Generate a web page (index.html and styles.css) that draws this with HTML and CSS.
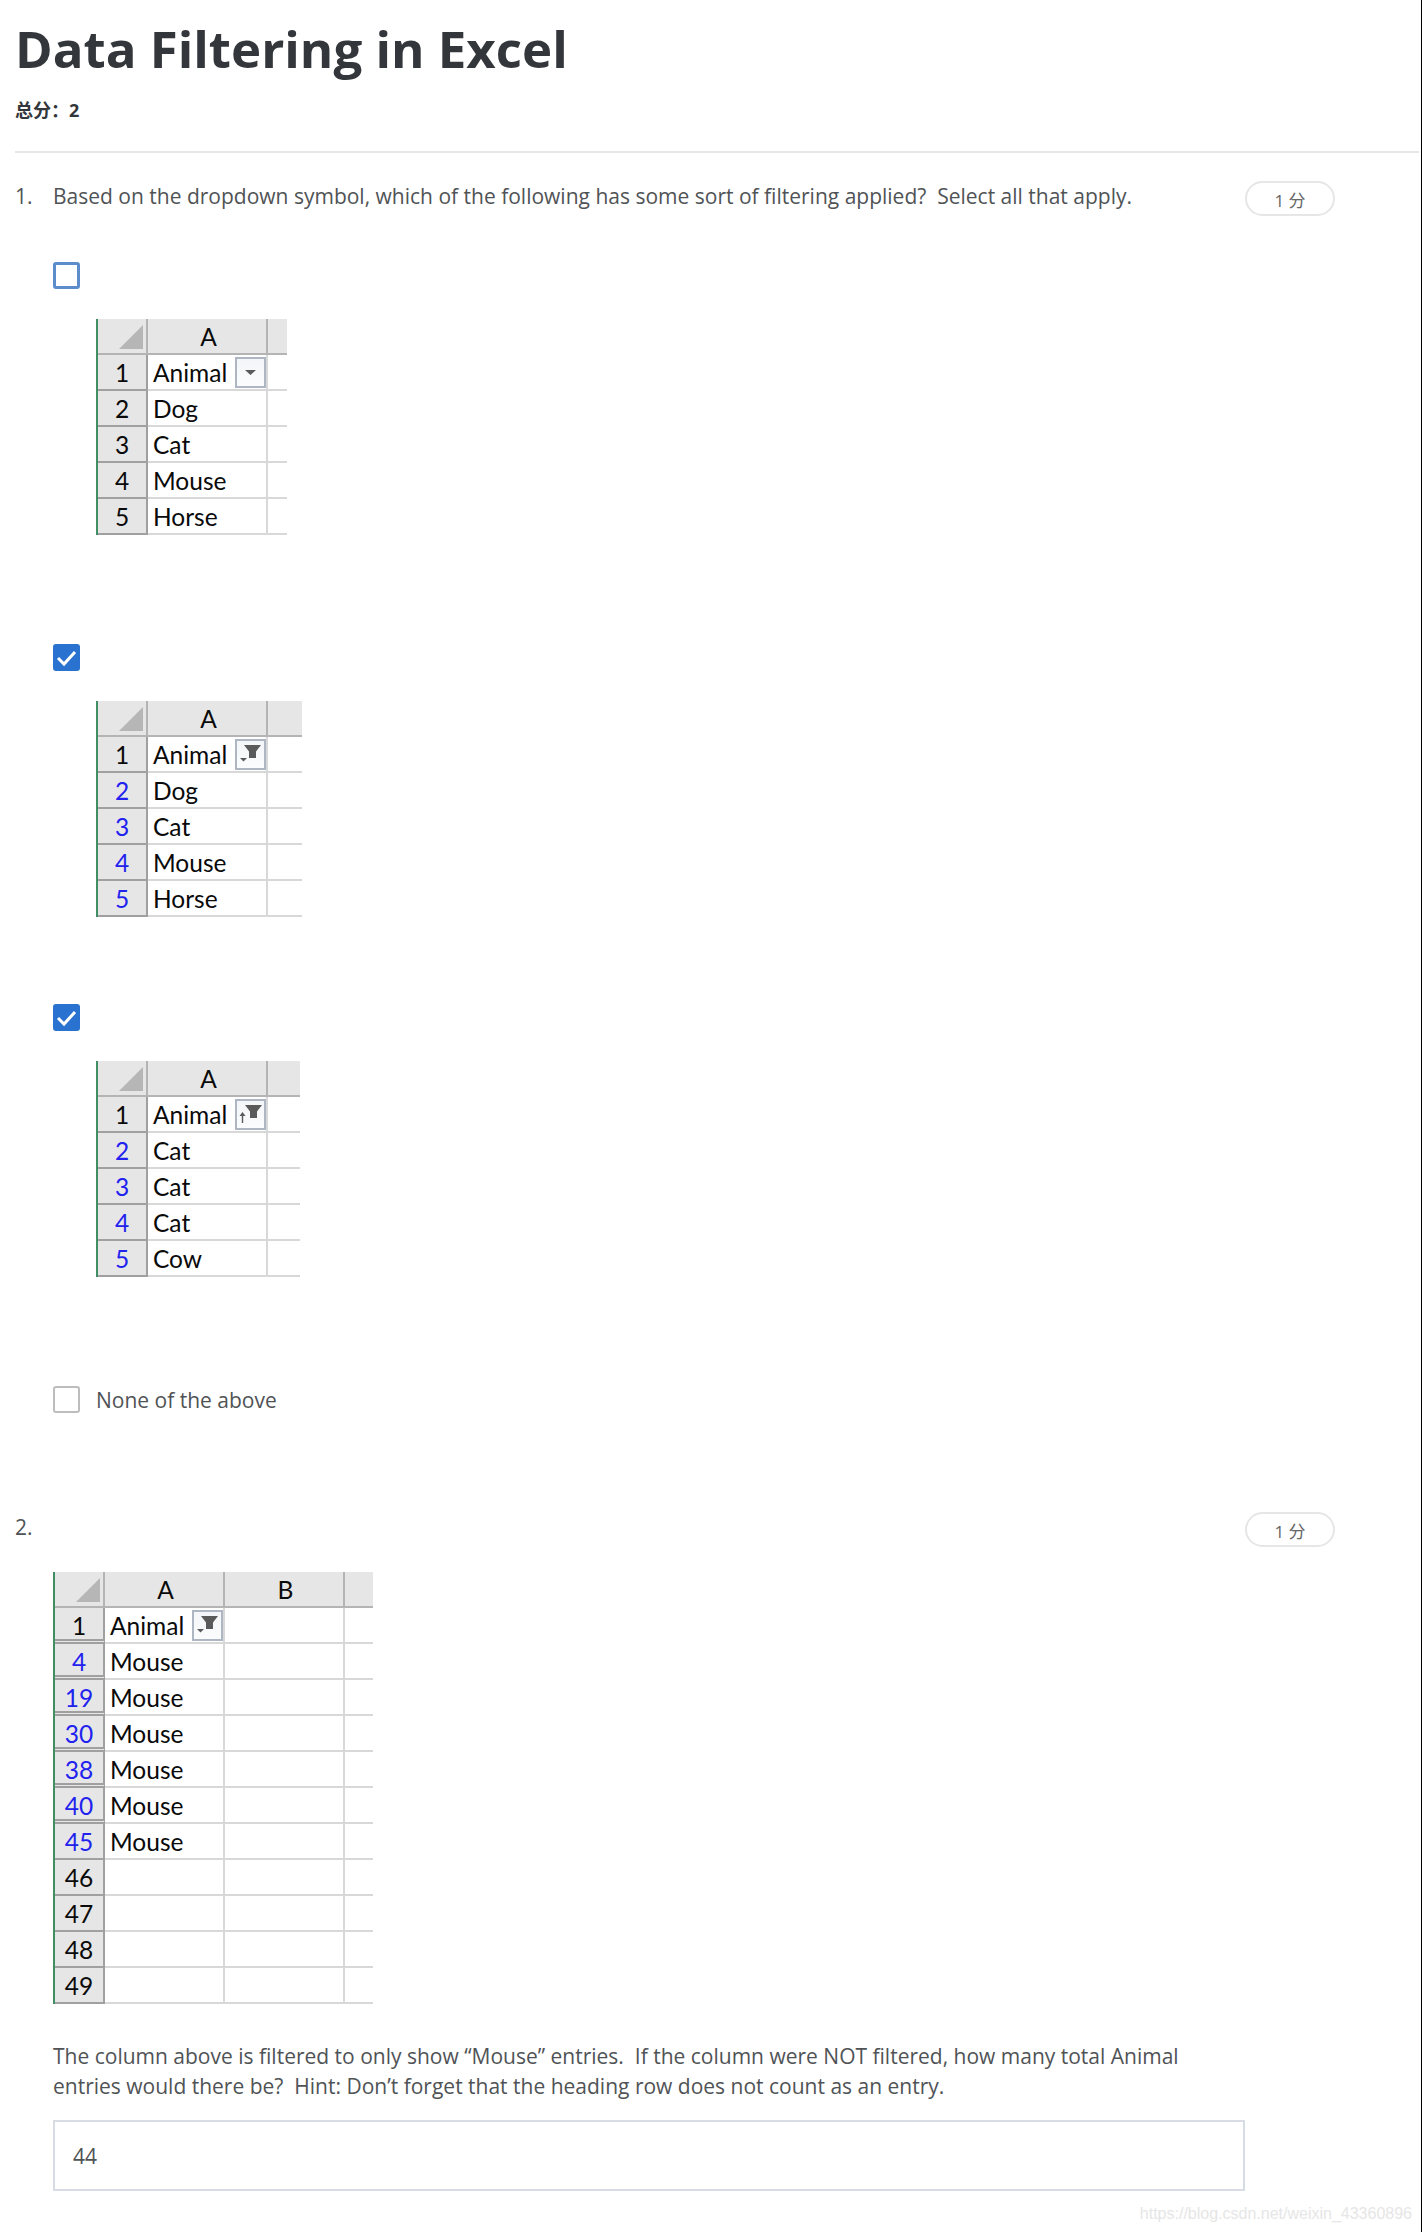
FILE: index.html
```html
<!DOCTYPE html>
<html lang="zh">
<head>
<meta charset="utf-8">
<title>Data Filtering in Excel</title>
<link rel="stylesheet" href="styles.css">
</head>
<body>
<main class="page">
  <header class="head">
    <h1 class="title">Data Filtering in Excel</h1>
    <p class="total">总分：2</p>
  </header>
  <hr class="rule">

  <section class="q">
    <div class="q-row">
      <span class="q-num">1.</span>
      <p class="q-text">Based on the dropdown symbol, which of the following has some sort of filtering applied?&nbsp; Select all that apply.</p>
      <span class="pill">1 分</span>
    </div>

    <div class="opt opt-a">
      <span class="cb cb-focus"></span>
      <div class="sheet sheet-a">
        <div class="cell corner"><svg class="tri" viewBox="0 0 24 24"><path d="M24 0V24H0Z"/></svg></div><div class="cell col">A</div><div class="cell col end"></div>
        <div class="cell rowh">1</div><div class="cell data">Animal<span class="fbtn"><svg viewBox="0 0 27 27"><path class="ico" d="M8 11h11l-5.500 5z"/></svg></span></div><div class="cell blank"></div>
        <div class="cell rowh">2</div><div class="cell data">Dog</div><div class="cell blank"></div>
        <div class="cell rowh">3</div><div class="cell data">Cat</div><div class="cell blank"></div>
        <div class="cell rowh">4</div><div class="cell data">Mouse</div><div class="cell blank"></div>
        <div class="cell rowh">5</div><div class="cell data">Horse</div><div class="cell blank"></div>
      </div>
    </div>

    <div class="opt opt-b">
      <span class="cb cb-on"><svg viewBox="0 0 27 27"><path d="M5 14l6 6L22 8" fill="none" stroke="#fff" stroke-width="3"/></svg></span>
      <div class="sheet sheet-b">
        <div class="cell corner"><svg class="tri" viewBox="0 0 24 24"><path d="M24 0V24H0Z"/></svg></div><div class="cell col">A</div><div class="cell col end"></div>
        <div class="cell rowh">1</div><div class="cell data">Animal<span class="fbtn"><svg viewBox="0 0 27 27"><path class="ico" d="M7 4h17l-5 6.500V17h-7v-6.500z"/><path class="ico" d="M3 17h7l-3.500 3.500z"/></svg></span></div><div class="cell blank"></div>
        <div class="cell rowh hit">2</div><div class="cell data">Dog</div><div class="cell blank"></div>
        <div class="cell rowh hit">3</div><div class="cell data">Cat</div><div class="cell blank"></div>
        <div class="cell rowh hit">4</div><div class="cell data">Mouse</div><div class="cell blank"></div>
        <div class="cell rowh hit">5</div><div class="cell data">Horse</div><div class="cell blank"></div>
      </div>
    </div>

    <div class="opt opt-c">
      <span class="cb cb-on"><svg viewBox="0 0 27 27"><path d="M5 14l6 6L22 8" fill="none" stroke="#fff" stroke-width="3"/></svg></span>
      <div class="sheet sheet-c">
        <div class="cell corner"><svg class="tri" viewBox="0 0 24 24"><path d="M24 0V24H0Z"/></svg></div><div class="cell col">A</div><div class="cell col end"></div>
        <div class="cell rowh">1</div><div class="cell data">Animal<span class="fbtn"><svg viewBox="0 0 27 27"><path class="ico" d="M8 4h17l-5 6.500V17h-7v-6.500z"/><path class="ico" d="M5.500 11l-3 4h2.300v7h1.400v-7h2.300z"/></svg></span></div><div class="cell blank"></div>
        <div class="cell rowh hit">2</div><div class="cell data">Cat</div><div class="cell blank"></div>
        <div class="cell rowh hit">3</div><div class="cell data">Cat</div><div class="cell blank"></div>
        <div class="cell rowh hit">4</div><div class="cell data">Cat</div><div class="cell blank"></div>
        <div class="cell rowh hit">5</div><div class="cell data">Cow</div><div class="cell blank"></div>
      </div>
    </div>

    <div class="opt-line">
      <span class="cb cb-off"></span>
      <span class="opt-label">None of the above</span>
    </div>
  </section>

  <section class="q q2">
    <div class="q-row">
      <span class="q-num">2.</span>
      <p class="q-text"></p>
      <span class="pill">1 分</span>
    </div>
    <div class="sheet sheet-d">
      <div class="cell corner"><svg class="tri" viewBox="0 0 24 24"><path d="M24 0V24H0Z"/></svg></div><div class="cell col">A</div><div class="cell col">B</div><div class="cell col end"></div>
      <div class="cell rowh gap">1</div><div class="cell data">Animal<span class="fbtn"><svg viewBox="0 0 27 27"><path class="ico" d="M7 4h17l-5 6.500V17h-7v-6.500z"/><path class="ico" d="M3 17h7l-3.500 3.500z"/></svg></span></div><div class="cell"></div><div class="cell blank"></div>
      <div class="cell rowh hit gap">4</div><div class="cell data">Mouse</div><div class="cell"></div><div class="cell blank"></div>
      <div class="cell rowh hit gap">19</div><div class="cell data">Mouse</div><div class="cell"></div><div class="cell blank"></div>
      <div class="cell rowh hit gap">30</div><div class="cell data">Mouse</div><div class="cell"></div><div class="cell blank"></div>
      <div class="cell rowh hit gap">38</div><div class="cell data">Mouse</div><div class="cell"></div><div class="cell blank"></div>
      <div class="cell rowh hit gap">40</div><div class="cell data">Mouse</div><div class="cell"></div><div class="cell blank"></div>
      <div class="cell rowh hit">45</div><div class="cell data">Mouse</div><div class="cell"></div><div class="cell blank"></div>
      <div class="cell rowh">46</div><div class="cell data"></div><div class="cell"></div><div class="cell blank"></div>
      <div class="cell rowh">47</div><div class="cell data"></div><div class="cell"></div><div class="cell blank"></div>
      <div class="cell rowh">48</div><div class="cell data"></div><div class="cell"></div><div class="cell blank"></div>
      <div class="cell rowh">49</div><div class="cell data"></div><div class="cell"></div><div class="cell blank"></div>
    </div>
    <p class="para">The column above is filtered to only show “Mouse” entries.&nbsp; If the column were NOT filtered, how many total Animal<br>entries would there be?&nbsp; Hint: Don’t forget that the heading row does not count as an entry.</p>
    <div class="answer">44</div>
  </section>
  <p class="mark">https://blog.csdn.net/weixin_43360896</p>
</main>
</body>
</html>
```
FILE: styles.css
```css
* { box-sizing: border-box; }
html, body { margin: 0; padding: 0; background: #fff; }
body {
  width: 1422px;
  height: 2232px;
  overflow: hidden;
  font-family: "Open Sans", "Noto Sans CJK SC", sans-serif;
  color: #505356;
  border-right: 1px solid #000;
}
.page { padding: 15px 2px 0 15px; position: relative; height: 100%; }

.title { margin: 0; font-size: 51px; line-height: 66px; font-weight: 700; color: #33363a; }
.total { margin: 17px 0 0; font-size: 18px; line-height: 24px; font-weight: 700; color: #33363a; }
.rule { margin: 29px 0 0; border: 0; height: 2px; background: #e6e6e6; }

.q { padding-top: 28px; }
.q-row { display: flex; align-items: flex-start; height: 35px; }
.q-num { width: 38px; font-size: 21px; line-height: 30px; }
.q-text { width: 1192px; margin: 0; font-size: 21px; line-height: 30px; }
.pill {
  width: 90px; height: 35px; border: 2px solid #e6e6e6; border-radius: 18px;
  display: flex; align-items: center; justify-content: center;
  padding-top: 2px;
  font-size: 17px; color: #666;
}

.opt { margin-left: 38px; }
.opt-a { margin-top: 46px; }
.opt-b { margin-top: 109px; }
.opt-c { margin-top: 87px; }
.cb { display: block; width: 27px; height: 27px; border-radius: 3px; flex: none; }
.cb svg { display: block; width: 27px; height: 27px; }
.cb-focus { border: 3px solid #5c8ccc; }
.cb-on { background: #2a72d0; }
.cb-off { border: 2px solid #bdbdbd; }

.opt-line { display: flex; align-items: center; gap: 16px; margin: 109px 0 0 38px; height: 27px; }
.opt-label { font-size: 21px; }

.sheet {
  display: grid;
  grid-auto-rows: 36px;
  margin: 30px 0 0 43px;
  border-left: 2px solid #3f8f63;
  font-family: Lato, "Open Sans", sans-serif;
  font-size: 24.5px;
  color: #0a0a0a;
}
.sheet-a { width: 191px; grid-template-columns: 50px 120px 19px; }
.sheet-b { width: 206px; grid-template-columns: 50px 120px 34px; }
.sheet-c { width: 204px; grid-template-columns: 50px 120px 32px; }
.sheet-d { width: 320px; grid-template-columns: 50px 120px 120px 28px; margin: 25px 0 0 38px; }

.cell { display: flex; align-items: center; border-right: 2px solid #d8d8d8; border-bottom: 2px solid #d8d8d8; }
.corner { background: #e6e6e6; border-color: #b4b4b4; justify-content: flex-end; padding: 5px 3px 3px 0; }
.tri { width: 24px; height: 24px; fill: #b6b6b6; display: block; }
.col { background: #e6e6e6; border-color: #b4b4b4; justify-content: center; padding-left: 3px; }
.rowh { background: #e6e6e6; border-right-color: #a0a0a0; border-bottom-color: #a0a0a0; justify-content: center; }
.hit { color: #2222ee; }
.gap { border-bottom: 5px double #a0a0a0; padding-top: 3px; }
.data { padding-left: 5px; justify-content: space-between; }
.blank, .end { border-right: 0; }

.fbtn {
  width: 31px; height: 31px;
  border: 2px solid #aeb6c3;
  background: linear-gradient(#f3f5f8, #fbfcfd);
  display: block;
}
.fbtn svg { display: block; width: 27px; height: 27px; }
.ico { fill: #5a5a5a; }

.para { margin: 37px 0 0 38px; font-size: 21px; line-height: 30px; }
.answer {
  margin: 19px 0 0 38px; width: 1192px; height: 71px;
  border: 2px solid #d8dce4;
  display: flex; align-items: center; padding-left: 18px;
  font-size: 21px;
}
.mark {
  position: absolute; right: 9px; top: 2204px; margin: 0;
  font-family: "Liberation Sans", sans-serif; font-size: 16px; line-height: 20px;
  color: #e6e6e6;
}
.q2 { padding-top: 99px; }
```
